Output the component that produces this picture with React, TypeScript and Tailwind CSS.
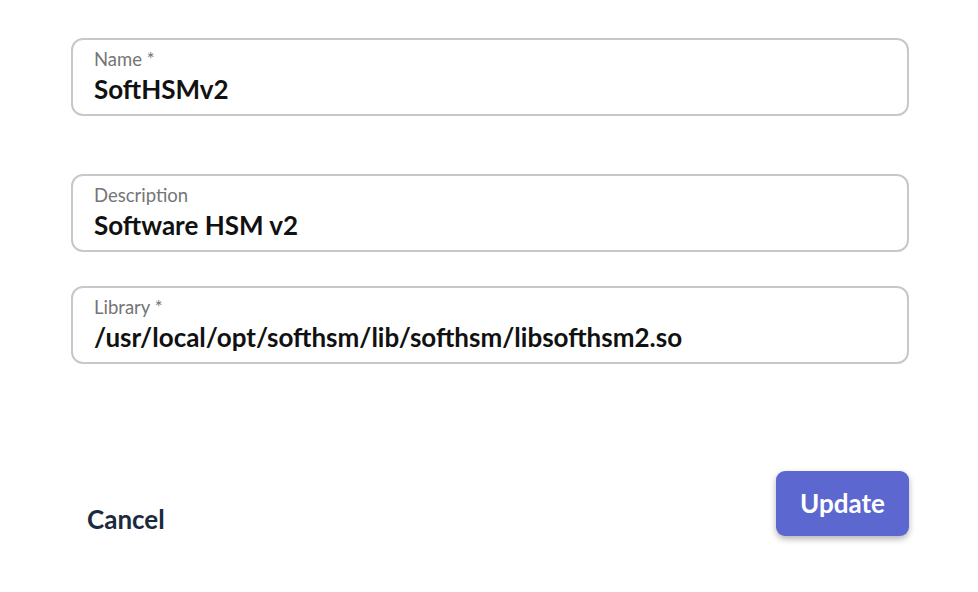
import React from "react";

function Field({ label, value }: { label: string; value: string }) {
    return (
        <div className="h-[78px] rounded-[12px] border-2 border-[#c8c8c8] pl-[21px] pr-4 pt-[8px]">
            <div className="text-[18.5px] leading-[22px] text-[#757575]">{label}</div>
            <div className="mt-[3px] text-[26px] leading-[32px] font-bold text-[#111111]">{value}</div>
        </div>
    );
}

export default function App() {
    return (
        <div className="w-[978px] h-[592px] bg-white font-['Lato','Noto_Sans',sans-serif]">
            <div className="pl-[71px] pr-[69px] pt-[38px]">
                <Field label="Name *" value="SoftHSMv2" />
                <div className="mt-[58px]">
                    <Field label="Description" value="Software HSM v2" />
                </div>
                <div className="mt-[34px]">
                    <Field label="Library *" value="/usr/local/opt/softhsm/lib/softhsm/libsofthsm2.so" />
                </div>
                <div className="mt-[104px] flex items-center justify-between">
                    <button className="ml-[16px] mt-[32px] text-[26px] font-bold text-[#1b2a3c]">Cancel</button>
                    <button className="h-[65px] w-[133px] rounded-[9px] bg-[#5c67d0] text-[26px] font-bold text-white shadow-[0_3px_6px_rgba(0,0,0,0.3)]">
                        Update
                    </button>
                </div>
            </div>
        </div>
    );
}
